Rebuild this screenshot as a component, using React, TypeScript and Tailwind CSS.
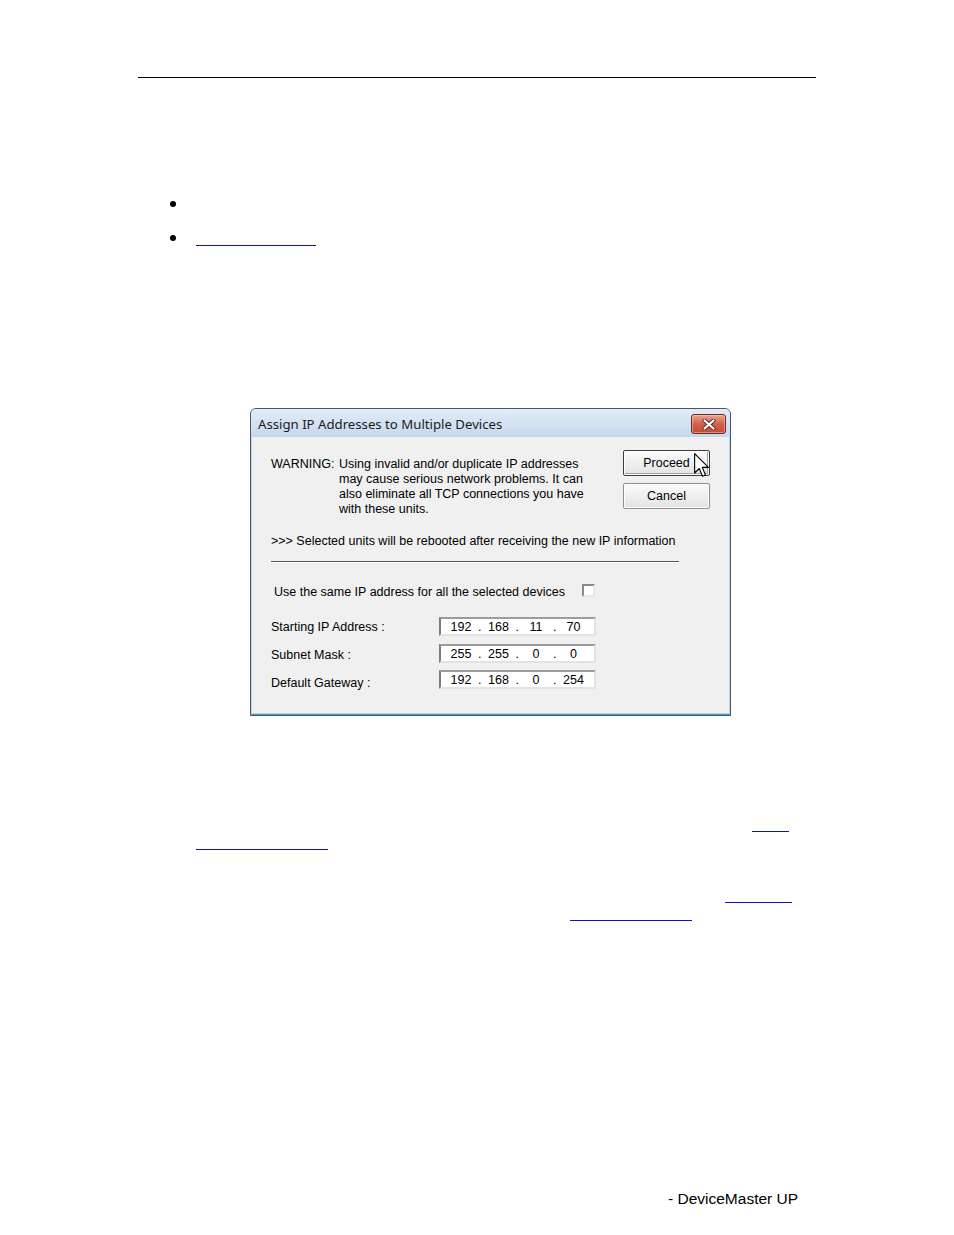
import { Fragment } from "react";

const SANS = "font-['Liberation_Sans',Arial,sans-serif]";

function Bullet({ link }: { link?: boolean }) {
  return (
    <div className="flex h-[17px] items-center">
      <div className="ml-[169.5px] h-[6px] w-[6px] rounded-full bg-black" />
      {link && (
        <span className="ml-[20.5px] box-border h-[17px] w-[120px] border-b border-[#1010cc]" />
      )}
    </div>
  );
}

function LinkRule({ left, width }: { left: number; width: number }) {
  // underline of a hyperlink whose words are not visible in the picture
  return (
    <div className="flex h-[18px]">
      <span
        className="box-border h-[17px] border-b-[1.5px] border-[#1010cc]"
        style={{ marginLeft: left, width }}
      />
    </div>
  );
}

function IpField({ parts }: { parts: string[] }) {
  return (
    <div className="box-border flex h-[19px] w-[157px] items-center border-2 border-t-[#9c9c9c] border-l-[#7d7d7d] border-r-[#e3e3e3] border-b-[#e3e3e3] bg-white pt-[2px] pl-[6px] leading-none">
      {parts.map((p, i) => (
        <Fragment key={i}>
          {i > 0 && <span className="w-[9.5px] text-center">.</span>}
          <span className="w-[28px] text-center">{p}</span>
        </Fragment>
      ))}
    </div>
  );
}

function WinButton({ label, isDefault }: { label: string; isDefault?: boolean }) {
  return (
    <div
      className={`box-border flex h-[26px] w-[87px] items-center justify-center rounded-[2px] border bg-linear-to-b from-[#fbfbfb] via-[#efefef] to-[#e2e2e2] pt-px text-[12.5px] ${
        isDefault
          ? "border-[#3c3c3c] shadow-[inset_0_0_0_1px_#ffffff,inset_-1px_-1px_0_1px_#a0a0a0]"
          : "border-[#8e8e8e] shadow-[inset_0_0_0_1px_#ffffff]"
      }`}
    >
      {label}
    </div>
  );
}

function Dialog() {
  return (
    <div className="ml-[250px] box-border flex h-[308px] w-[481px] flex-col overflow-hidden rounded-t-[6px] border border-[#48566a] bg-[#c4d6ec]">
      {/* title bar */}
      <div className="flex h-[28px] shrink-0 items-start bg-linear-to-b from-[#e3ecf7] to-[#c6d8ee]">
        <div className="flex h-[28px] flex-1 items-center pt-[3px] pl-[7px] font-['Noto_Sans','Open_Sans',sans-serif] text-[13.2px] text-[#1b1b1b]">
          Assign IP Addresses to Multiple Devices
        </div>
        <div className="mt-[5px] mr-[4px] box-border flex h-[20px] w-[35px] items-center justify-center rounded-[3px] border border-[#6d2b22] bg-linear-to-b from-[#e9a594] via-[#d2614b] to-[#c24b34] shadow-[inset_0_0_0_1px_rgba(255,220,210,0.45)]">
          <svg width="14" height="11" viewBox="0 0 14 11">
            <path d="M2.5 1.5 L11.5 9.5 M11.5 1.5 L2.5 9.5" stroke="#5a2a22" strokeWidth="4" strokeLinecap="round" />
            <path d="M2.5 1.5 L11.5 9.5 M11.5 1.5 L2.5 9.5" stroke="#ffffff" strokeWidth="2.2" strokeLinecap="round" />
          </svg>
        </div>
      </div>

      {/* body */}
      <div className="mx-px flex flex-1 flex-col bg-[#f0f0f0] pt-[13px] pl-[19px] text-[12.5px] text-black">
        <div className="flex">
          <div className="mt-[7px] flex w-[352px] leading-[15px]">
            <span className="w-[68px] shrink-0">WARNING:</span>
            <div className="flex flex-col">
              <span>Using invalid and/or duplicate IP addresses</span>
              <span>may cause serious network problems. It can</span>
              <span>also eliminate all TCP connections you have</span>
              <span>with these units.</span>
            </div>
          </div>
          <div className="relative flex flex-col gap-[7px]">
            <WinButton label="Proceed" isDefault />
            <WinButton label="Cancel" />
            {/* mouse pointer resting on Proceed */}
            <svg className="absolute top-[3px] left-[71px]" width="15" height="25" viewBox="0 0 12 20">
              <path
                d="M0.5 0.5 L0.5 16 L4.2 12.4 L6.8 18.6 L9.2 17.6 L6.6 11.5 L11.5 11.5 Z"
                fill="#ffffff"
                stroke="#000000"
                strokeWidth="0.9"
                strokeLinejoin="round"
              />
            </svg>
          </div>
        </div>

        <div className="mt-[17px] leading-[15px]">
          &gt;&gt;&gt; Selected units will be rebooted after receiving the new IP information
        </div>

        <div className="mt-[12px] w-[408px] border-t border-b border-t-[#555555] border-b-white" />

        <div className="mt-[20px] flex h-[15px] items-center pl-[3px]">
          <span className="w-[308px] pt-[3px]">Use the same IP address for all the selected devices</span>
          <div className="box-border h-[13px] w-[13px] border-2 border-t-[#8a8a8a] border-l-[#8a8a8a] border-r-[#e6e6e6] border-b-[#e6e6e6] bg-white" />
        </div>

        <div className="mt-[19px] flex h-[19px] items-center">
          <span className="w-[168px] pt-[2px]">Starting IP Address :</span>
          <IpField parts={["192", "168", "11", "70"]} />
        </div>
        <div className="mt-[8px] flex h-[19px] items-center">
          <span className="w-[168px] pt-[4px]">Subnet Mask :</span>
          <IpField parts={["255", "255", "0", "0"]} />
        </div>
        <div className="mt-[7px] flex h-[19px] items-center">
          <span className="w-[168px] pt-[7px]">Default Gateway :</span>
          <IpField parts={["192", "168", "0", "254"]} />
        </div>
      </div>

      {/* bottom frame */}
      <div className="mx-px h-px shrink-0 bg-[#b7cde6]" />
      <div className="h-px shrink-0 bg-[#3aa6d0]" />
    </div>
  );
}

export default function App() {
  return (
    <div className={`relative h-[1235px] w-[954px] overflow-hidden bg-white ${SANS}`}>
      <div className="pt-[77px]">
        <div className="ml-[138px] h-px w-[678px] bg-black" />
      </div>

      <div className="mt-[117px]">
        <Bullet />
        <div className="mt-[17px]">
          <Bullet link />
        </div>
      </div>

      <div className="mt-[162px]">
        <Dialog />
      </div>

      <div className="mt-[99px]">
        <LinkRule left={752} width={37} />
        <LinkRule left={196} width={132} />
      </div>
      <div className="mt-[35px]">
        <LinkRule left={725} width={67} />
        <LinkRule left={570} width={122} />
      </div>

      <div className="mt-[268px] pl-[668px] text-[15.5px] leading-[18px] text-black">
        - DeviceMaster UP
      </div>
    </div>
  );
}
